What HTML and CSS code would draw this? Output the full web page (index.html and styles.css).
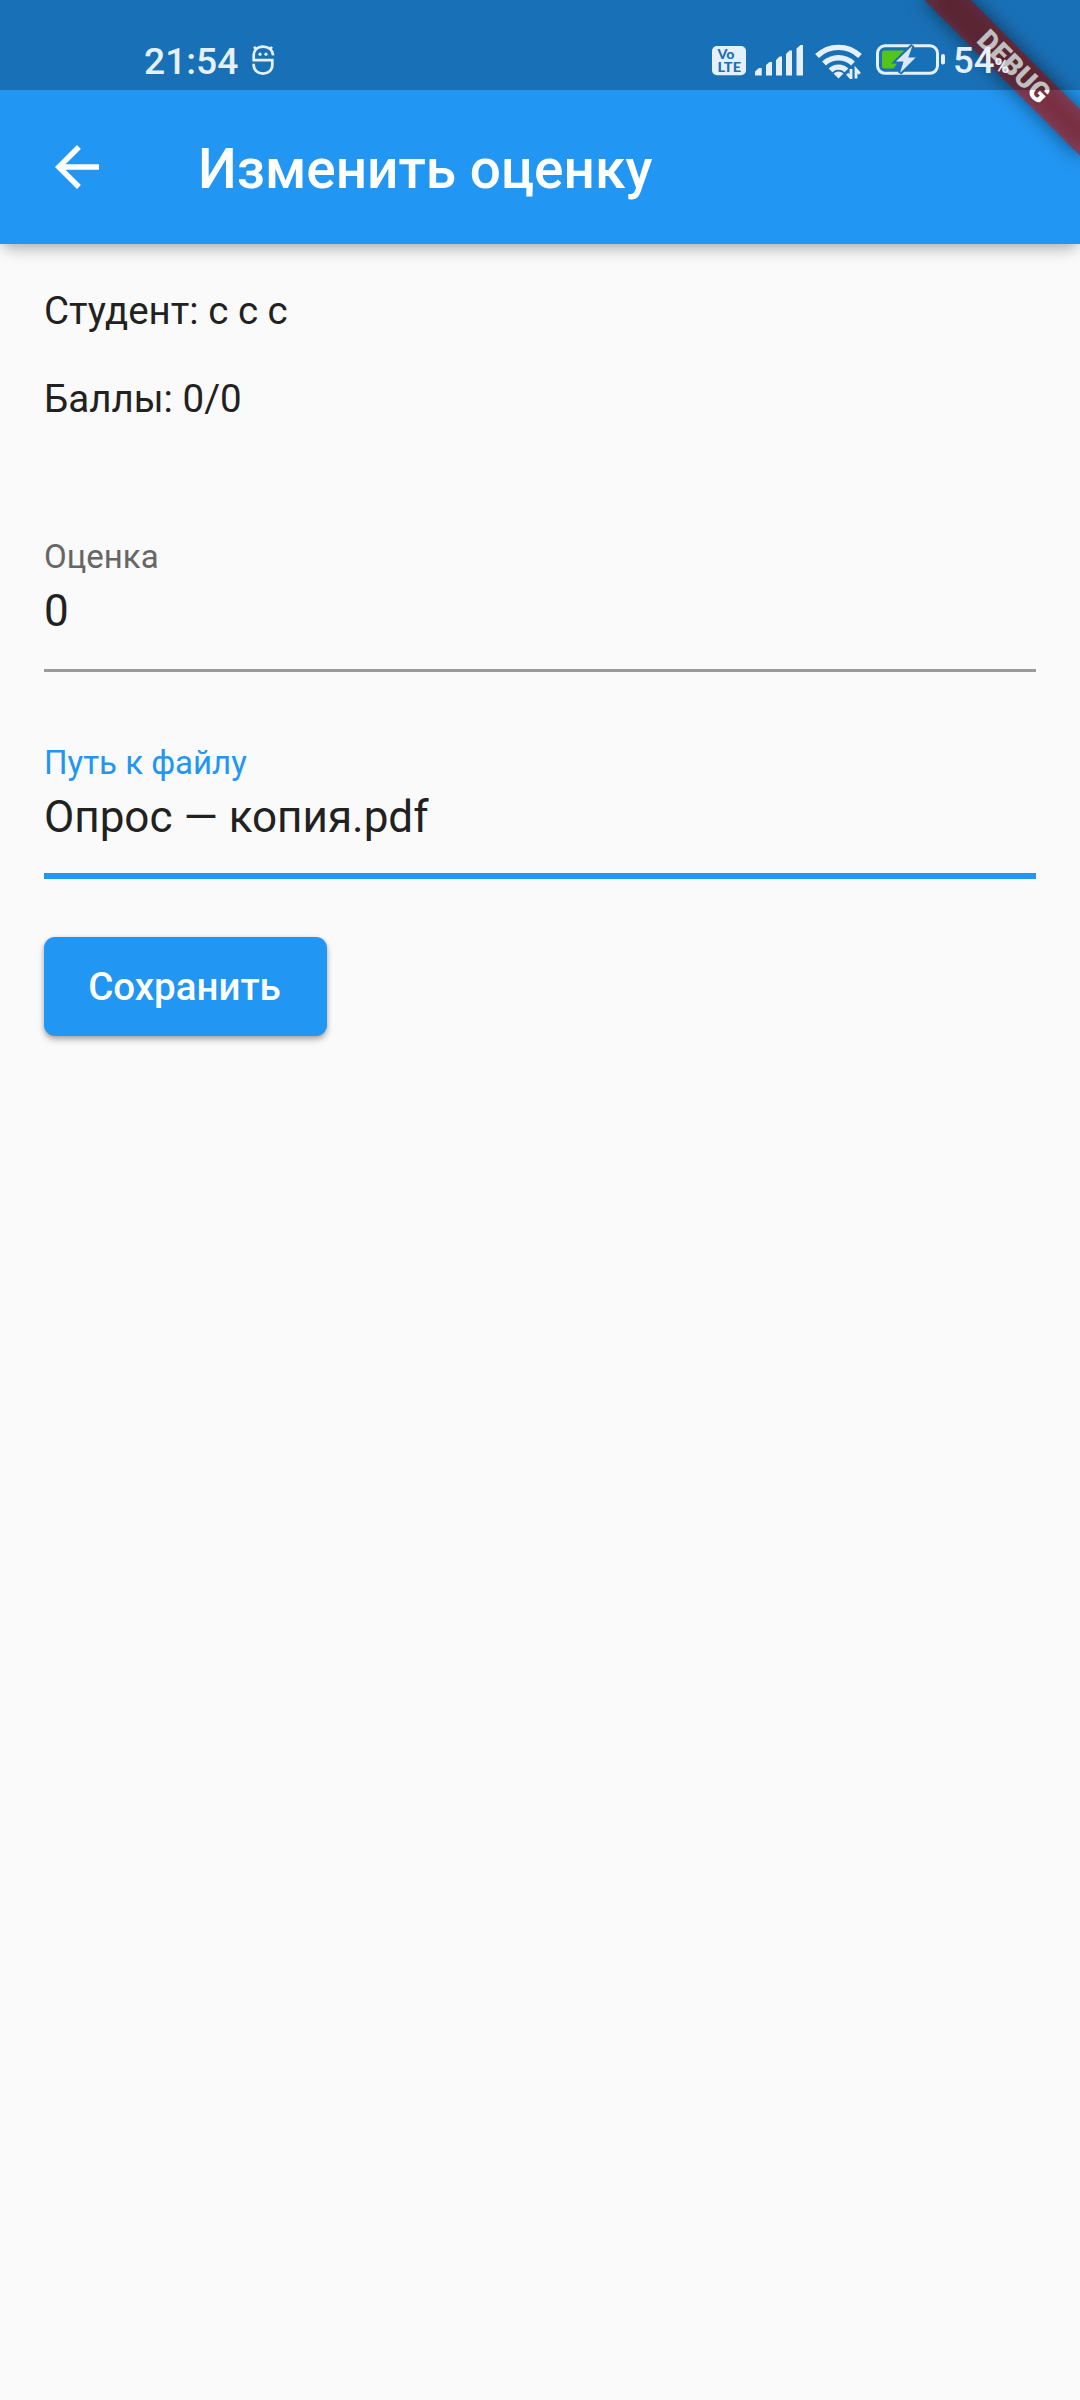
FILE: index.html
```html
<!DOCTYPE html>
<html lang="ru">
<head>
<meta charset="utf-8">
<title>Изменить оценку</title>
<link rel="stylesheet" href="styles.css">
</head>
<body>
<div class="screen">
  <header class="app-bar">
    <div class="status-bar">
      <span class="clock">21:54</span>
      <svg class="face-icon" viewBox="0 0 24 32" width="24" height="32" fill="none" stroke="currentColor" stroke-width="2.700">
        <path d="M22.200 11.300C21.500 5.800 17.500 2.600 12 2.600S2.700 6.200 2.700 12v4.200h18.600v5a9.300 8.500 0 0 1-18.600 0v-1.400M5.500 5.500 3 2.800M18.500 5.500 21 2.800"/>
        <circle cx="9" cy="10.200" r="1.600" fill="currentColor" stroke="none"/>
        <circle cx="15" cy="10.200" r="1.600" fill="currentColor" stroke="none"/>
      </svg>
      <svg class="volte-icon" viewBox="0 0 34 30" width="34" height="30">
        <rect width="34" height="29.300" rx="5" fill="currentColor"/>
        <text class="volte-text" x="5.500" y="13.300" textLength="17" lengthAdjust="spacingAndGlyphs">Vo</text>
        <text class="volte-text" x="5.500" y="25.900" textLength="23.500" lengthAdjust="spacingAndGlyphs">LTE</text>
      </svg>
      <svg class="signal-icon" viewBox="0 0 48 31" width="48" height="31" fill="currentColor">
        <path d="M0 26.500l4-3.500h2.700v7.500H0zM11 20l3.500-3H17v13.500h-6zM21 15l3.500-3.500H27v19h-6zM31 9l3.500-3.500H37v25h-6zM41.500 3.500l4-3.500H48v30.500h-6.500z"/>
      </svg>
      <svg class="wifi-icon" viewBox="0 0 47 36" width="47" height="36" fill="none" stroke="currentColor" stroke-width="5.400">
        <path d="M2 13a31 31 0 0 1 43 0M9 20.500a21 21 0 0 1 29 0M15.500 27.400a11.500 11.500 0 0 1 16 0"/>
        <path d="M18.500 30.500q5-4 10 0l-5 5z" fill="currentColor" stroke="none"/>
        <path d="M36 26v9l-3.800-4.200M41 35.500v-9l3.800 4.200" stroke-width="2.800"/>
      </svg>
      <svg class="battery-icon" viewBox="0 0 70 32" width="70" height="32">
        <rect x="1.500" y="1.800" width="60" height="27.500" rx="7.500" fill="none" stroke="currentColor" stroke-width="3"/>
        <path class="battery-level" d="M8 6.500h22L17.500 24.500H8q-2 0-2-2v-14q0-2 2-2z"/>
        <path class="battery-bolt" d="M36.500 1.500 20 17.500h7.500L24 29 39.700 13.500h-7.400z"/>
        <rect x="65" y="10" width="4" height="10.500" rx="2" fill="currentColor"/>
      </svg>
      <span class="charge">54<small class="percent">%</small></span>
    </div>
    <div class="toolbar">
      <svg class="back-icon" viewBox="0 0 24 24" width="66" height="66" fill="currentColor">
        <path d="M20 11H7.830l5.590-5.590L12 4l-8 8 8 8 1.410-1.410L7.830 13H20v-2z"/>
      </svg>
      <h1 class="title">Изменить оценку</h1>
    </div>
  </header>
  <main class="content">
    <p class="info">Студент: с с с</p>
    <p class="info">Баллы: 0/0</p>
    <div class="field field-grade">
      <span class="label">Оценка</span>
      <span class="value">0</span>
    </div>
    <div class="field field-active">
      <span class="label">Путь к файлу</span>
      <span class="value">Опрос — копия.pdf</span>
    </div>
    <button class="save" type="button">Сохранить</button>
  </main>
  <div class="banner-corner">
    <div class="banner-shadow"></div>
    <div class="banner">DEBUG</div>
  </div>
</div>
</body>
</html>
```
FILE: styles.css
```css
* { box-sizing: border-box; }
body {
  margin: 0;
  background: #fafafa;
  font-family: Roboto, "Noto Sans", sans-serif;
}
.screen {
  position: relative;
  width: 1080px;
  height: 2400px;
  overflow: hidden;
  background: #fafafa;
  color: #212121;
}
.app-bar {
  position: relative;
  height: 244px;
  background: #2196f3;
  box-shadow: 0 11px 14px -5px rgba(0, 0, 0, .22), 0 2px 10px rgba(0, 0, 0, .1);
  color: #fff;
}
.status-bar {
  position: relative;
  z-index: 2;
  display: flex;
  align-items: flex-start;
  height: 90px;
  padding: 44px 0 0 144px;
  background: rgba(0, 0, 0, .25);
  color: #e6f0fa;
}
.clock, .charge {
  font-weight: 500;
  line-height: 44px;
  white-space: nowrap;
}
.clock {
  width: 107px;
  margin-top: -5px;
  font-size: 37.2px;
}
.volte-icon { margin: 2px 9px 0 437px; }
.volte-text {
  fill: #1a70b6;
  font: 900 13px Lato, sans-serif;
}
.signal-icon { margin: 1px 12px 0 0; }
.wifi-icon { margin: -1px 14px 0 0; }
.battery-icon { margin-right: 7px; }
.battery-level { fill: #52c41a; }
.battery-bolt {
  fill: #dbe8f7;
  stroke: #1a70b6;
  stroke-width: 4;
  paint-order: stroke;
}
.charge {
  margin-top: -5px;
  font-size: 36.5px;
}
.percent {
  font-size: 20px;
  font-weight: 700;
}
.toolbar {
  display: flex;
  align-items: center;
  gap: 88px;
  height: 154px;
  padding: 0 44px;
}
.title {
  margin: 3px 0 0;
  font-size: 55px;
  font-weight: 500;
  line-height: 64px;
}
.content {
  display: flex;
  flex-direction: column;
  align-items: flex-start;
  padding: 45px 44px 44px;
}
.info {
  margin: 0 0 44px;
  font-size: 38.5px;
  line-height: 44px;
}
.field {
  display: flex;
  flex-direction: column;
  width: 100%;
  height: 136px;
  padding-top: 1px;
  border-bottom: 3px solid #9a9a9a;
}
.field-grade { margin: 71px 0 68px; }
.label {
  color: #666;
  font-size: 33px;
  line-height: 40px;
}
.value {
  margin-top: 8px;
  font-size: 44px;
  line-height: 52px;
}
.field-active {
  height: 139px;
  padding-top: 3px;
  border-bottom: 6px solid #2196f3;
}
.field-active .label { color: #2196f3; }
.save {
  width: 283px;
  height: 99px;
  margin-top: 58px;
  padding: 0 2px 0 0;
  border: 0;
  border-radius: 11px;
  background: #2196f3;
  box-shadow: 0 4px 6px rgba(0, 0, 0, .26), 0 1px 4px rgba(0, 0, 0, .14);
  color: #fff;
  font: 500 38.5px/44px Roboto, sans-serif;
}
.banner-corner {
  position: absolute;
  z-index: 1;
  top: 0;
  right: 0;
  width: 260px;
  height: 260px;
  overflow: hidden;
}
.banner, .banner-shadow {
  position: absolute;
  top: 49.6px;
  left: 83.9px;
  width: 220px;
  height: 33px;
  transform: rotate(45deg);
}
.banner-shadow {
  background: rgba(0, 0, 0, .5);
  filter: blur(10px);
}
.banner {
  background: rgba(183, 28, 28, .627);
  color: #fff;
  font-size: 28px;
  font-weight: 900;
  line-height: 33px;
  text-align: center;
}
```
